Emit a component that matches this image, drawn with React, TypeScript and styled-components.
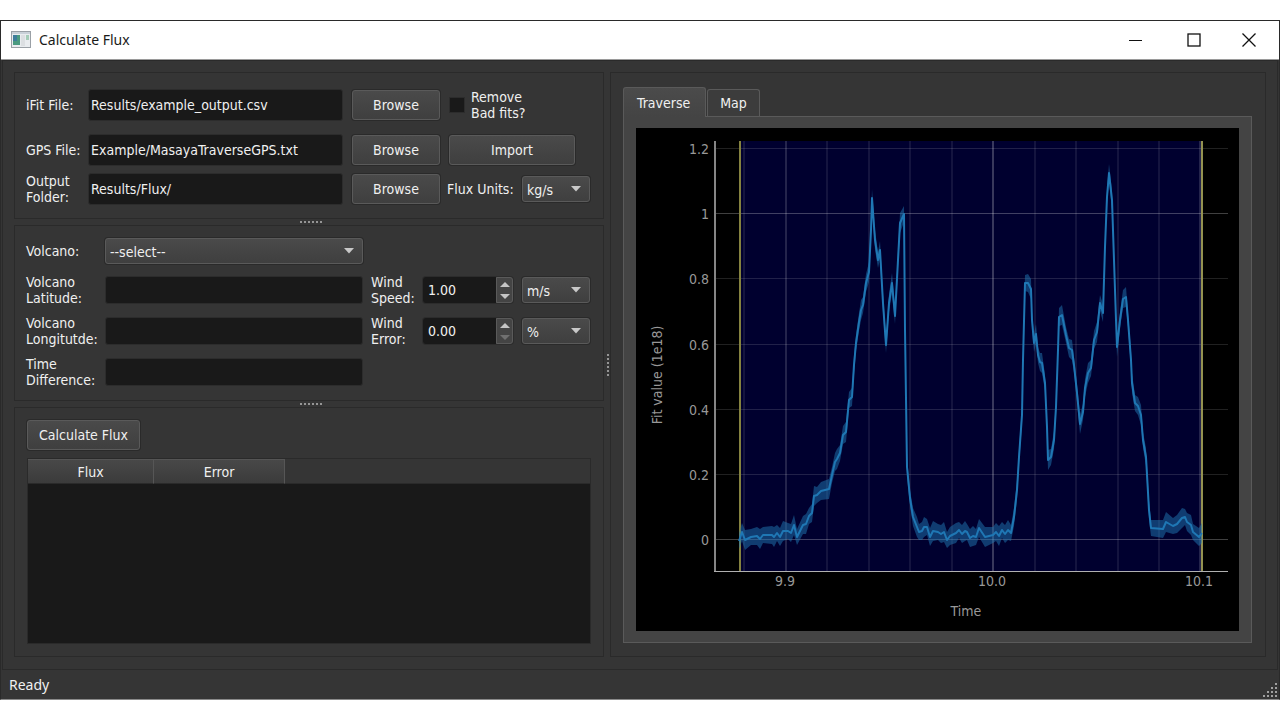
import React, { useId, useState } from "react";
import styled, { createGlobalStyle, css } from "styled-components";

const color = {
  window: "#353535",
  edge: "#2a2a2a",
  field: "#191919",
  raised: "#444444",
  rim: "#5a5a5a",
  text: "#f0f0f0",
};

const uiFont = `"DejaVu Sans Condensed", "DejaVu Sans", Tahoma, sans-serif`;
const systemFont = `"Noto Sans", "Segoe UI", sans-serif`;

const GlobalStyle = createGlobalStyle`
  * { box-sizing: border-box; }
  body { margin: 0; background: #ffffff; }
  button, input, select { font: inherit; color: inherit; margin: 0; }
`;

/* ---------- window frame ---------- */

const Page = styled.div`
  min-height: 100vh;
  display: flex;
  padding: 20px 0;
`;

const Window = styled.main`
  flex: 1;
  min-width: 0;
  display: flex;
  flex-direction: column;
  border: 1px solid ${color.edge};
  border-bottom-color: #8a8a8a;
  background: ${color.window};
  color: ${color.text};
  font: 14px/16px ${uiFont};
`;

const TitleBar = styled.header`
  height: 39px;
  display: flex;
  align-items: center;
  padding: 0 4px 0 10px;
  background: #ffffff;
  border-bottom: 1px solid #9a9a9a;
  color: #1a1a1a;
`;

const Title = styled.h1`
  flex: 1;
  margin: 0;
  padding-left: 8px;
  font: 400 14px/20px ${systemFont};
`;

const CaptionButton = styled.button`
  width: 58px;
  height: 100%;
  padding: 0;
  border: 0;
  background: none;
  display: grid;
  place-items: center;

  &:last-child {
    width: 52px;
  }
`;

const Body = styled.div`
  flex: 1;
  display: grid;
  grid-template-columns: minmax(0, 590fr) 6px minmax(0, 656fr);
  margin: 0 1px;
  padding: 11px 11px 12px;
  border: 1px solid ${color.edge};
`;

const LeftColumn = styled.div`
  display: flex;
  flex-direction: column;
`;

const Panel = styled.section`
  border: 1px solid ${color.edge};
`;

const StatusBar = styled.footer`
  height: 29px;
  display: flex;
  align-items: center;
  justify-content: space-between;
  padding-left: 8px;
  font: 14px/20px ${systemFont};
`;

const GripSlot = styled.div`
  align-self: flex-end;
  line-height: 0;
`;

const RowSplitter = styled.div`
  height: 6px;
  display: grid;
  place-items: center;
  padding-left: 4px;
`;

const ColumnSplitter = styled.div`
  display: grid;
  align-items: center;
  justify-items: end;
`;

/* ---------- form parts ---------- */

const FilePanel = styled(Panel)`
  display: grid;
  grid-template-columns: 53px minmax(0, 1fr) 88px 141px;
  grid-template-rows: 44px 32px 32px;
  column-gap: 9px;
  row-gap: 7px;
  align-items: center;
  padding: 10px 13px 13px 11px;
`;

const VolcanoPanel = styled(Panel)`
  display: grid;
  grid-template-columns: 79px minmax(0, 1fr) 8px 52px 90px 9px 68px;
  grid-template-rows: 28px 32px 32px 32px;
  row-gap: 9px;
  align-items: center;
  padding: 11px 13px 12px 11px;
`;

const ResultPanel = styled(Panel)`
  flex: 1;
  display: flex;
  flex-direction: column;
  align-items: flex-start;
  gap: 8px;
  padding: 12px;
`;

const Label = styled.label<{ $column?: number }>`
  white-space: pre;
  ${(p) => p.$column && css`grid-column: ${p.$column};`}
`;

const fieldBox = css`
  width: 100%;
  min-width: 0;
  background: ${color.field};
  border: 1px solid #2c2c2c;
  border-radius: 3px;
  outline: 0;
`;

const FileInput = styled.input`
  ${fieldBox}
  height: 32px;
  padding: 0 2px;
`;

const TextInput = styled.input`
  ${fieldBox}
  height: 28px;
  padding: 0 4px;
`;

const raisedBox = css`
  background: linear-gradient(#4a4a4a, #3f3f3f);
  border: 1px solid ${color.rim};
  border-radius: 3px;
  box-shadow: 0 0 0 1px ${color.edge};
`;

const Button = styled.button<{ $width?: number }>`
  ${raisedBox}
  width: ${(p) => (p.$width ? `${p.$width}px` : "100%")};
  height: 30px;
  padding: 0 0 1px;
  text-align: center;
`;

const CheckRow = styled.div`
  display: flex;
  align-items: center;
  gap: 6px;
`;

const CheckBox = styled.input`
  appearance: none;
  width: 16px;
  height: 16px;
  background: ${color.field};
  border: 1px solid #2c2c2c;

  &:checked {
    background: #2a82da;
  }
`;

const UnitRow = styled.div`
  display: flex;
  align-items: center;
  justify-content: space-between;
  margin-left: -2px;
`;

const SelectBox = styled.div<{ $width?: number }>`
  position: relative;
  width: ${(p) => (p.$width ? `${p.$width}px` : "100%")};

  svg {
    position: absolute;
    right: 8px;
    top: 10px;
    pointer-events: none;
  }
`;

const Select = styled.select`
  ${raisedBox}
  appearance: none;
  display: block;
  width: 100%;
  height: 26px;
  padding: 2px 4px 0;
`;

const SpinBox = styled.div`
  display: flex;
  height: 26px;
  border-radius: 3px;
  box-shadow: 0 0 0 1px #2c2c2c;
`;

const SpinInput = styled.input`
  flex: 1;
  min-width: 0;
  padding: 0 5px;
  border: 0;
  border-radius: 3px 0 0 3px;
  background: ${color.field};
  outline: 0;
  appearance: textfield;

  &::-webkit-inner-spin-button {
    appearance: none;
  }
`;

const SpinButtons = styled.div`
  width: 17px;
  display: flex;
  flex-direction: column;
  border: 1px solid ${color.rim};
  border-radius: 0 3px 3px 0;
  background: #444444;
`;

const StepButton = styled.button`
  flex: 1;
  padding: 0;
  border: 0;
  background: none;
  display: grid;
  place-items: center;
  color: #c4c4c4;

  &:disabled {
    color: #707070;
  }
`;

/* ---------- results table ---------- */

const TableFrame = styled.div`
  align-self: stretch;
  flex: 1;
  background: ${color.field};
  border: 1px solid ${color.edge};
`;

const Table = styled.table`
  width: 100%;
  border-collapse: separate;
  border-spacing: 0;
  table-layout: fixed;
  background: ${color.window};
`;

const HeadCell = styled.th<{ $width: number }>`
  width: ${(p) => p.$width}px;
  height: 25px;
  padding: 0;
  font-weight: 400;
  background: linear-gradient(#484848, #3b3b3b);
  border-top: 1px solid #555555;
  border-right: 1px solid #565656;
  border-bottom: 1px solid ${color.edge};
`;

const HeadFiller = styled.td`
  border-bottom: 1px solid ${color.edge};
`;

/* ---------- tabs ---------- */

const TabPanel = styled(Panel)`
  display: flex;
  flex-direction: column;
  padding: 14px 13px 13px 12px;
`;

const TabList = styled.div`
  display: flex;
  align-items: flex-end;
  gap: 1px;
  height: 29px;
`;

const Tab = styled.button<{ $active: boolean }>`
  position: relative;
  border: 1px solid ${color.rim};
  border-bottom: 0;
  border-radius: 3px 3px 0 0;
  ${(p) =>
    p.$active
      ? css`
          height: 30px;
          margin-bottom: -1px;
          padding: 0 15px 0 13px;
          background: linear-gradient(#4b4b4b, ${color.raised});
          z-index: 1;
        `
      : css`
          height: 27px;
          padding: 0 12px;
          background: #3c3c3c;
        `}
`;

const TabPane = styled.div`
  flex: 1;
  display: flex;
  border: 1px solid ${color.rim};
  background: ${color.raised};
  padding: 11px 12px;
`;

const Plot = styled.svg`
  flex: 1;
  min-width: 0;
  width: 100%;
  background: #000000;
  font-family: ${uiFont};
  font-size: 14px;
  fill: #989898;
`;

/* ---------- chart data, in plot units ---------- */

const ORIGIN = { x: 636, y: 128 };

const trace: [number, number][] = [
  [739, 541], [742, 532], [745, 540], [751, 537], [757, 536], [760, 539], [763, 535], [772, 535],
  [774, 537], [777, 533], [780, 537], [783, 531], [788, 531], [791, 533], [794, 525], [797, 537],
  [803, 525], [806, 524], [809, 516], [812, 513], [814, 496], [817, 495], [821, 491], [829, 489],
  [832, 475], [835, 462], [837, 459], [840, 453], [843, 435], [846, 432], [849, 400], [852, 397],
  [854, 365], [856, 343], [859, 322], [861, 310], [863, 305], [866, 283], [869, 272], [871, 230],
  [872, 198], [875, 240], [878, 260], [880, 250], [883, 303], [886, 345], [889, 303], [892, 283],
  [895, 316], [898, 260], [900, 223], [904, 214], [905, 330], [907, 467], [910, 498], [913, 517],
  [917, 527], [919, 532], [922, 531], [924, 527], [927, 527], [930, 537], [933, 531], [938, 532],
  [941, 534], [944, 532], [947, 540], [950, 536], [956, 533], [959, 530], [962, 534], [965, 531],
  [967, 532], [970, 538], [973, 536], [976, 537], [979, 528], [985, 537], [993, 535], [996, 532],
  [999, 536], [1002, 530], [1005, 534], [1008, 530], [1011, 533], [1014, 517], [1017, 490],
  [1019, 457], [1022, 415], [1023, 360], [1025, 283], [1028, 283], [1031, 289], [1032, 320],
  [1034, 343], [1036, 334], [1038, 355], [1040, 362], [1042, 363], [1045, 383], [1047, 427],
  [1048, 460], [1051, 457], [1054, 440], [1056, 407], [1058, 350], [1059, 317], [1062, 315],
  [1066, 335], [1069, 348], [1072, 350], [1074, 365], [1077, 393], [1080, 424], [1083, 412],
  [1085, 388], [1088, 373], [1091, 368], [1094, 340], [1097, 332], [1100, 303], [1103, 313],
  [1105, 247], [1107, 197], [1109, 173], [1112, 200], [1114, 260], [1116, 320], [1117, 347],
  [1120, 320], [1123, 299], [1126, 297], [1128, 320], [1131, 360], [1132, 383], [1135, 403],
  [1138, 406], [1141, 415], [1143, 440], [1146, 457], [1149, 510], [1151, 528], [1163, 529],
  [1166, 522], [1173, 526], [1177, 524], [1182, 518], [1185, 517], [1187, 522], [1191, 525],
  [1193, 532], [1199, 537], [1202, 533],
];

const spread = (i: number) => 8 + (i % 3);
const line = trace.map(([x, y]) => `${x},${y}`).join(" ");
const band = [
  ...trace.map(([x, y], i) => `${x},${y - spread(i)}`),
  ...trace.map(([x, y], i) => `${x},${y + spread(i)}`).reverse(),
].join(" ");

const yTicks = [
  { y: 149, label: "1.2" },
  { y: 214, label: "1", major: true },
  { y: 279, label: "0.8" },
  { y: 345, label: "0.6" },
  { y: 410, label: "0.4" },
  { y: 475, label: "0.2" },
  { y: 540, label: "0", major: true },
];

const xTicks = [
  { x: 744 }, { x: 786, label: "9.9" }, { x: 827 }, { x: 869 }, { x: 910 }, { x: 952 },
  { x: 993, label: "10.0", major: true }, { x: 1035 }, { x: 1076 }, { x: 1118 }, { x: 1159 },
  { x: 1200, label: "10.1" },
];

function TraverseChart() {
  return (
    <Plot viewBox="0 0 603 503" role="img" aria-label="Fit value against time">
      <g transform={`translate(${-ORIGIN.x} ${-ORIGIN.y})`}>
        <rect x="740" y="141" width="462" height="430" fill="#00002f" />
        <g fill="#ffffff">
          {yTicks.map((t) => (
            <rect key={t.label} x="716" y={t.y - 1} width="512" height="1" opacity={t.major ? 0.25 : 0.13} />
          ))}
          {xTicks.map((t) => (
            <rect key={t.x} x={t.x - 1} y="141" width="2" height="430" opacity={t.major ? 0.22 : t.label ? 0.14 : 0.08} />
          ))}
        </g>
        <rect x="714" y="141" width="2" height="431" fill="#858585" />
        <rect x="714" y="571" width="514" height="1" fill="#b0b0b0" />
        <rect x="739" y="141" width="2" height="430" fill="#84823f" />
        <rect x="1201" y="141" width="2" height="430" fill="#949250" />
        <polygon points={band} fill="#1f77b4" fillOpacity="0.5" />
        <polyline points={line} fill="none" stroke="#1f77b4" strokeWidth="2" strokeLinejoin="round" />
        <g textAnchor="end">
          {yTicks.map((t) => (
            <text key={t.label} x="709" y={t.y + 5}>{t.label}</text>
          ))}
        </g>
        <g textAnchor="middle">
          {xTicks.filter((t) => t.label).map((t) => (
            <text key={t.label} x={t.x - 1} y="586">{t.label}</text>
          ))}
          <text x="966" y="616">Time</text>
          <text transform="translate(662 375) rotate(-90)">Fit value (1e18)</text>
        </g>
      </g>
    </Plot>
  );
}

/* ---------- small drawings ---------- */

const AppIcon = () => (
  <svg width="20" height="18" viewBox="0 0 20 18" aria-hidden="true">
    <rect x="0.5" y="0.5" width="19" height="16" fill="#e9ecef" stroke="#9aa0a6" />
    <rect x="1" y="1" width="18" height="2" fill="#c9d1d8" />
    <rect x="2" y="4" width="7" height="10" fill="#4a9a80" />
    <rect x="2" y="4" width="4" height="6" fill="#3f7d9b" />
    <rect x="10" y="4" width="4" height="11" fill="#dcdfe2" />
    <rect x="15" y="4" width="3" height="5" fill="#a5cdb8" />
  </svg>
);

const Caret = () => (
  <svg width="12" height="6" viewBox="0 0 12 6" aria-hidden="true">
    <path d="M1 0H11L6 5.5Z" fill="#c8c8c8" />
  </svg>
);

const StepArrow = ({ up }: { up?: boolean }) => (
  <svg width="10" height="5" viewBox="0 0 10 5" aria-hidden="true">
    <path d={up ? "M0 5H10L5 0Z" : "M0 0H10L5 5Z"} fill="currentColor" />
  </svg>
);

const RowDots = () => (
  <svg width="24" height="4" viewBox="0 0 24 4" aria-hidden="true" fill="#959595">
    {[0, 1, 2, 3, 4, 5].map((i) => (
      <rect key={i} x={i * 4 + 1} y="1" width="2" height="2" />
    ))}
  </svg>
);

const ColumnDots = () => (
  <svg width="4" height="24" viewBox="0 0 4 24" aria-hidden="true" fill="#959595">
    {[0, 1, 2, 3, 4, 5].map((i) => (
      <rect key={i} x="1" y={i * 4 + 1} width="2" height="2" />
    ))}
  </svg>
);

const SizeGrip = () => (
  <svg width="16" height="16" viewBox="0 0 16 16" aria-hidden="true" fill="#a0a0a0">
    {[0, 1, 2, 3].map((row) =>
      Array.from({ length: row + 1 }, (_, i) => (
        <rect key={`${row}-${i}`} x={12 - i * 4} y={row * 4} width="2" height="2" />
      ))
    )}
  </svg>
);

/* ---------- controls ---------- */

function Dropdown({ id, options, width, label }: { id?: string; options: string[]; width?: number; label?: string }) {
  return (
    <SelectBox $width={width}>
      <Select id={id} aria-label={label}>
        {options.map((o) => (
          <option key={o}>{o}</option>
        ))}
      </Select>
      <Caret />
    </SelectBox>
  );
}

function Spinner({ id, initial }: { id: string; initial: number }) {
  const [value, setValue] = useState(initial.toFixed(2));
  const step = (d: number) => setValue((Math.max(0, Number(value) + d)).toFixed(2));
  return (
    <SpinBox>
      <SpinInput id={id} type="number" min="0" step="0.01" value={value} onChange={(e) => setValue(e.target.value)} />
      <SpinButtons>
        <StepButton type="button" aria-label="Increase" onClick={() => step(1)}>
          <StepArrow up />
        </StepButton>
        <StepButton type="button" aria-label="Decrease" disabled={Number(value) <= 0} onClick={() => step(-1)}>
          <StepArrow />
        </StepButton>
      </SpinButtons>
    </SpinBox>
  );
}

function FileRow({ label, value }: { label: string; value: string }) {
  const id = useId();
  return (
    <>
      <Label htmlFor={id}>{label}</Label>
      <FileInput id={id} type="text" defaultValue={value} />
      <Button type="button">Browse</Button>
    </>
  );
}

export default function App() {
  const [tab, setTab] = useState<"Traverse" | "Map">("Traverse");
  return (
    <Page>
      <GlobalStyle />
      <Window>
        <TitleBar>
          <AppIcon />
          <Title>Calculate Flux</Title>
          <CaptionButton type="button" aria-label="Minimize">
            <svg width="14" height="14" viewBox="0 0 14 14"><path d="M0 7.5H13" stroke="#111" /></svg>
          </CaptionButton>
          <CaptionButton type="button" aria-label="Maximize">
            <svg width="14" height="14" viewBox="0 0 14 14"><rect x="1" y="1" width="12" height="12" fill="none" stroke="#111" strokeWidth="1.3" /></svg>
          </CaptionButton>
          <CaptionButton type="button" aria-label="Close">
            <svg width="14" height="14" viewBox="0 0 14 14"><path d="M0.5 0.5L13.5 13.5M13.5 0.5L0.5 13.5" stroke="#111" strokeWidth="1.3" /></svg>
          </CaptionButton>
        </TitleBar>

        <Body>
          <LeftColumn>
            <FilePanel>
              <FileRow label="iFit File:" value="Results/example_output.csv" />
              <CheckRow>
                <CheckBox id="remove-bad" type="checkbox" />
                <Label htmlFor="remove-bad">{"Remove\nBad fits?"}</Label>
              </CheckRow>
              <FileRow label="GPS File:" value="Example/MasayaTraverseGPS.txt" />
              <Button type="button" $width={126}>Import</Button>
              <FileRow label={"Output\nFolder:"} value="Results/Flux/" />
              <UnitRow>
                <Label htmlFor="flux-units">Flux Units:</Label>
                <Dropdown id="flux-units" options={["kg/s", "t/day"]} width={68} />
              </UnitRow>
            </FilePanel>

            <RowSplitter><RowDots /></RowSplitter>

            <VolcanoPanel>
              <Label htmlFor="volcano">Volcano:</Label>
              <Dropdown id="volcano" options={["--select--"]} />

              <Label htmlFor="latitude" $column={1}>{"Volcano\nLatitude:"}</Label>
              <TextInput id="latitude" type="text" />
              <Label htmlFor="wind-speed" $column={4}>{"Wind\nSpeed:"}</Label>
              <Spinner id="wind-speed" initial={1} />
              <span />
              <Dropdown label="Wind speed units" options={["m/s", "knots"]} />

              <Label htmlFor="longitude" $column={1}>{"Volcano\nLongitutde:"}</Label>
              <TextInput id="longitude" type="text" />
              <Label htmlFor="wind-error" $column={4}>{"Wind\nError:"}</Label>
              <Spinner id="wind-error" initial={0} />
              <span />
              <Dropdown label="Wind error units" options={["%", "abs"]} />

              <Label htmlFor="time-difference" $column={1}>{"Time\nDifference:"}</Label>
              <TextInput id="time-difference" type="text" />
            </VolcanoPanel>

            <RowSplitter><RowDots /></RowSplitter>

            <ResultPanel>
              <Button type="button" $width={113}>Calculate Flux</Button>
              <TableFrame>
                <Table>
                  <thead>
                    <tr>
                      <HeadCell $width={126} scope="col">Flux</HeadCell>
                      <HeadCell $width={131} scope="col">Error</HeadCell>
                      <HeadFiller />
                    </tr>
                  </thead>
                </Table>
              </TableFrame>
            </ResultPanel>
          </LeftColumn>

          <ColumnSplitter><ColumnDots /></ColumnSplitter>

          <TabPanel>
            <TabList role="tablist">
              {(["Traverse", "Map"] as const).map((name) => (
                <Tab key={name} type="button" role="tab" aria-selected={tab === name} $active={tab === name} onClick={() => setTab(name)}>
                  {name}
                </Tab>
              ))}
            </TabList>
            <TabPane role="tabpanel">{tab === "Traverse" && <TraverseChart />}</TabPane>
          </TabPanel>
        </Body>

        <StatusBar>
          <span>Ready</span>
          <GripSlot><SizeGrip /></GripSlot>
        </StatusBar>
      </Window>
    </Page>
  );
}
